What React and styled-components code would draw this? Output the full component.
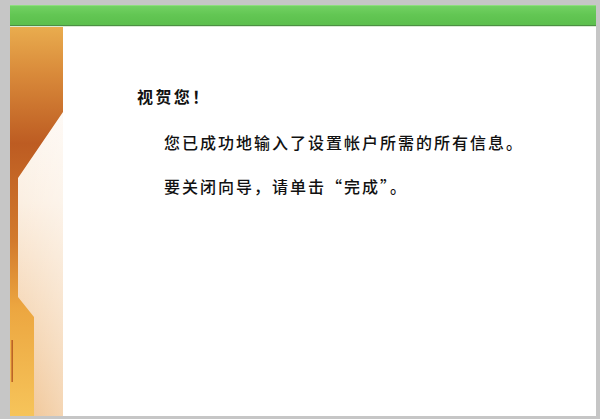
import React from 'react'
import styled, { createGlobalStyle } from 'styled-components'

const GlobalStyle = createGlobalStyle`
  html, body {
    margin: 0;
    padding: 0;
    background: #c6c6c6;
  }
  #root {
    width: 600px;
    height: 419px;
  }
`

const Frame = styled.div`
  width: 600px;
  height: 419px;
  box-sizing: border-box;
  padding: 5px 4px 3px 10px;
  background: #c6c6c6;
  display: flex;
  flex-direction: column;
`

const TitleBar = styled.div`
  height: 20px;
  flex: none;
  background: linear-gradient(180deg, #74d264 0%, #62c653 50%, #5cbf4d 100%);
  border-bottom: 1px solid #4c8f43;
  box-shadow: inset 0 1px 0 #8ede7e;
`

const Divider = styled.div`
  height: 1px;
  flex: none;
  background: #d9ecd4;
`

const Body = styled.div`
  flex: 1;
  display: flex;
  background: #ffffff;
  min-height: 0;
`

const SideArt = styled.svg`
  width: 53px;
  height: 100%;
  flex: none;
  display: block;
`

const Content = styled.div`
  flex: 1;
  padding: 57px 0 0 74px;
  font-family: "Noto Sans CJK SC", "Noto Sans", sans-serif;
  color: #111;
`

const Heading = styled.div`
  font-size: 16px;
  font-weight: 700;
  letter-spacing: 2.4px;
  line-height: 24px;
`

const Para = styled.p`
  margin: ${p => p.$top}px 0 0 27px;
  font-size: 16px;
  font-weight: 500;
  letter-spacing: 2px;
  line-height: 24px;
  white-space: nowrap;
`

function Decoration() {
  return (
    <SideArt viewBox="0 0 53 389" preserveAspectRatio="none">
      <defs>
        <linearGradient id="orange" x1="0" y1="0" x2="0" y2="1">
          <stop offset="0" stopColor="#e9ac4e" />
          <stop offset="0.12" stopColor="#d98a3a" />
          <stop offset="0.3" stopColor="#bd5c22" />
          <stop offset="0.55" stopColor="#d27a2c" />
          <stop offset="0.72" stopColor="#eca640" />
          <stop offset="1" stopColor="#f6c45a" />
        </linearGradient>
        <linearGradient id="peach" x1="0" y1="0" x2="0" y2="1">
          <stop offset="0" stopColor="#ffffff" />
          <stop offset="0.45" stopColor="#fbeee0" />
          <stop offset="1" stopColor="#efbf8a" />
        </linearGradient>
        <linearGradient id="fade" x1="0" y1="0" x2="1" y2="0">
          <stop offset="0" stopColor="#ffffff" stopOpacity="0" />
          <stop offset="1" stopColor="#ffffff" stopOpacity="0.35" />
        </linearGradient>
      </defs>
      <rect x="0" y="0" width="53" height="389" fill="url(#peach)" />
      <rect x="0" y="0" width="53" height="389" fill="url(#fade)" />
      <polygon
        points="0,0 53,0 53,85 8,151 8,270 24,290 24,389 0,389"
        fill="url(#orange)"
      />
      <rect x="1.5" y="313" width="1.3" height="42" fill="#b0501e" />
    </SideArt>
  )
}

export default function App() {
  return (
    <>
      <GlobalStyle />
      <Frame>
        <TitleBar />
        <Divider />
        <Body>
          <Decoration />
          <Content>
            <Heading>视贺您！</Heading>
            <Para $top={22}>您已成功地输入了设置帐户所需的所有信息。</Para>
            <Para $top={20}>要关闭向导，请单击“完成”。</Para>
          </Content>
        </Body>
      </Frame>
    </>
  )
}
